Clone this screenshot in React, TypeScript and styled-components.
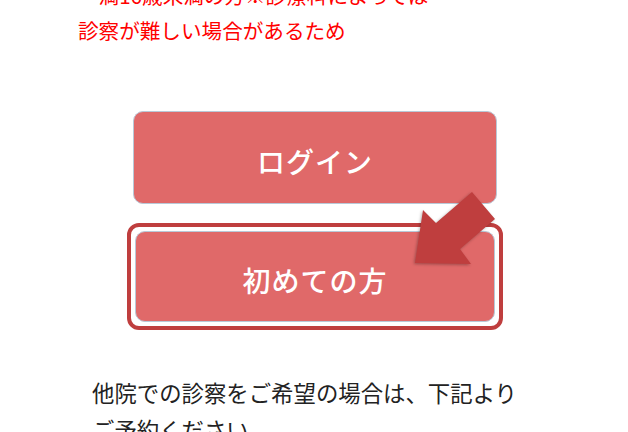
import React from 'react'
import styled, { createGlobalStyle } from 'styled-components'

const GlobalStyle = createGlobalStyle`
  html, body {
    margin: 0;
    padding: 0;
    background: #fff;
  }
  body {
    font-family: 'Noto Sans CJK JP', 'Noto Sans', sans-serif;
    overflow: hidden;
  }
`

const Page = styled.main`
  width: 628px;
  height: 432px;
  overflow: hidden;
`

const Scroller = styled.div`
  margin-top: -22px;
  display: flex;
  flex-direction: column;
`

const Notice = styled.p`
  margin: 0 0 0 78px;
  font-size: 20.6px;
  line-height: 35px;
  color: #ff0000;
  text-indent: 1em;
`

const Actions = styled.div`
  margin-top: 63px;
  display: flex;
  flex-direction: column;
  align-items: center;
  gap: 19px;
  padding-left: 2px;
`

const Button = styled.button<{ $width: number; $height: number }>`
  width: ${(p) => p.$width}px;
  height: ${(p) => p.$height}px;
  border: 1px solid #b9c9d8;
  border-radius: 10px;
  background: #e06969;
  color: #fff;
  font-family: 'Noto Sans CJK JP', sans-serif;
  font-size: 28px;
  font-weight: 500;
  letter-spacing: 1px;
  display: flex;
  align-items: center;
  justify-content: center;
  padding: 6px 0 0;
  cursor: pointer;
`

const Highlight = styled.div`
  position: relative;
  border: 4px solid #bf3e3e;
  border-radius: 12px;
  padding: 4px;
  background: #fff;
`

const Arrow = styled.svg`
  position: absolute;
  left: 278px;
  top: -40px;
  width: 90px;
  height: 82px;
  overflow: visible;
  filter: drop-shadow(-1px 1px 1.5px rgba(0, 0, 0, 0.3));
`

const Guide = styled.p`
  margin: 44px 0 0 92px;
  font-size: 22.4px;
  line-height: 37px;
  color: #222;
`

export default function App() {
  return (
    <Page>
      <GlobalStyle />
      <Scroller>
        <Notice>
          満16歳未満の方※診療科によっては
          <br />
          診察が難しい場合があるため
        </Notice>
        <Actions>
          <Button $width={364} $height={93}>ログイン</Button>
          <Highlight>
            <Button $width={360} $height={91}>初めての方</Button>
            <Arrow viewBox="0 0 90 82">
              <polygon
                points="6,76 14,23 27,36 63,5 86,32 51,62 62,77"
                fill="#bf3e3e"
              />
            </Arrow>
          </Highlight>
        </Actions>
        <Guide>
          他院での診察をご希望の場合は、下記より
          <br />
          ご予約ください
        </Guide>
      </Scroller>
    </Page>
  )
}
